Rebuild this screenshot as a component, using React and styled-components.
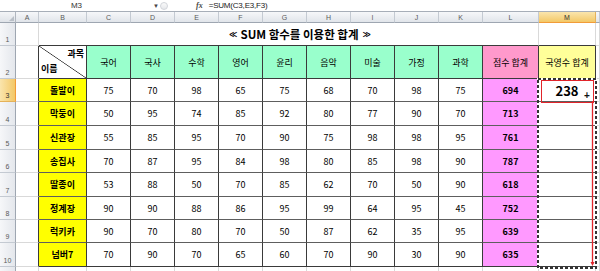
import React from 'react';
import styled, { createGlobalStyle } from 'styled-components';

const GRID = '#d9d9d9';
const DARK = '#3a3a3a';
const HLINE = '#5e5e5e';

const GlobalStyle = createGlobalStyle`
  html, body {
    margin: 0;
    padding: 0;
    background: #fff;
  }
  body {
    font-family: "Noto Sans CJK KR", "Noto Sans", sans-serif;
    overflow: hidden;
  }
`

const Window = styled.div`
  position: relative;
  width: 600px;
  height: 271px;
  overflow: hidden;
  background: #fff;
`
const FormulaBar = styled.div`
  display: flex;
  align-items: center;
  height: 12px;
  box-sizing: border-box;
  border-bottom: 1px solid #a7aeb8;
  font-family: "Liberation Sans", Arial, sans-serif;
  font-size: 8px;
  color: #222;
`
const NameBox = styled.div`
  width: 153px;
  text-align: center;
  color: #333;
`
const DropArrow = styled.span`
  width: 7px;
  font-size: 6px;
  color: #444;
`
const Splitter = styled.span`
  width: 8px;
  height: 8px;
  border-radius: 50%;
  border: 1px solid #d2d5da;
  background: linear-gradient(#fafafa, #e6e8eb);
  box-sizing: border-box;
`
const Fx = styled.span`
  margin-left: 28px;
  font-family: "Liberation Serif", serif;
  font-style: italic;
  font-weight: bold;
  font-size: 8px;
  color: #4a4a4a;
`
const Formula = styled.span`
  margin-left: 6px;
  letter-spacing: -0.2px;
`

const Sheet = styled.div`
  display: grid;
  grid-template-columns: 16px 23px 48px repeat(9, 44px) 56px 57px 1fr;
  grid-template-rows: 11px 23px 33px 23px 24px 24px 23px 24px 23px 23px 24px 10px;
`
const Corner = styled.div`
  position: relative;
  box-sizing: border-box;
  background: linear-gradient(#f4f5f7, #dfe3e8);
  border-right: 1px solid #b1b7c0;
  border-bottom: 1px solid #9ea6b1;
  &::after {
    content: '';
    position: absolute;
    right: 1px;
    bottom: 1px;
    border-left: 5px solid transparent;
    border-bottom: 5px solid #b9bfc7;
  }
`
const ColHead = styled.div`
  display: flex;
  align-items: center;
  justify-content: center;
  box-sizing: border-box;
  font-family: "Liberation Sans", Arial, sans-serif;
  font-size: 7px;
  color: ${p => (p.$active ? '#333' : '#5a5a5a')};
  background: ${p => (p.$active ? 'linear-gradient(#fae5ad, #f3c867)' : 'linear-gradient(#f6f7f9, #e1e5ea)')};
  border-right: 1px solid ${p => (p.$active ? '#e5b259' : '#c4cad2')};
  border-bottom: 1px solid ${p => (p.$active ? '#f29b38' : '#9ea6b1')};
`
const RowHead = styled.div`
  display: flex;
  align-items: flex-end;
  justify-content: center;
  padding-bottom: 2px;
  box-sizing: border-box;
  font-family: "Liberation Sans", Arial, sans-serif;
  font-size: 7px;
  color: ${p => (p.$active ? '#333' : '#5a5a5a')};
  background: ${p => (p.$active ? 'linear-gradient(90deg, #fae5ad, #f3c867)' : 'linear-gradient(90deg, #f6f7f9, #e4e7ec)')};
  border-right: 1px solid ${p => (p.$active ? '#f29b38' : '#9ea6b1')};
  border-bottom: 1px solid ${p => (p.$active ? '#e5b259' : '#c4cad2')};
`
const Cell = styled.div`
  display: flex;
  align-items: center;
  justify-content: center;
  box-sizing: border-box;
  overflow: hidden;
  white-space: nowrap;
  background: ${p => p.$bg || '#fff'};
  border-right: 1px solid ${p => p.$r || GRID};
  border-bottom: 1px solid ${p => p.$b || GRID};
  font-size: 9px;
  font-weight: ${p => (p.$bold ? 700 : 400)};
  color: #000;
`
const TitleCell = styled(Cell)`
  grid-column: span 11;
  gap: 4px;
  padding-left: 22px;
  font-size: 11.5px;
  font-weight: 700;
`
const Guillemet = styled.span`
  font-family: "DejaVu Sans", sans-serif;
  font-size: 8px;
  font-weight: 700;
  letter-spacing: -1px;
`
const DiagCell = styled(Cell)`
  flex-direction: column;
  align-items: stretch;
  justify-content: space-between;
  padding: 3px 2px 5px 2px;
  font-weight: 700;
  background: linear-gradient(to top right, #fff calc(50% - 0.7px), #333 50%, #fff calc(50% + 0.7px));
`
const DiagTop = styled.span`
  align-self: flex-end;
  line-height: 1;
`
const DiagBottom = styled.span`
  align-self: flex-start;
  line-height: 1;
`
const BigValue = styled.span`
  font-size: 13px;
  font-weight: 700;
  padding-top: 1px;
`
const CopyMarquee = styled.svg`
  position: absolute;
  left: 537px;
  top: 78px;
  width: 60px;
  height: 191px;
  pointer-events: none;
`
const TraceBox = styled.div`
  position: absolute;
  left: 541px;
  top: 80px;
  width: 53px;
  height: 23px;
  box-sizing: border-box;
  border: 1.5px solid #e1242a;
`
const TraceLine = styled.svg`
  position: absolute;
  left: 589px;
  top: 101px;
  width: 7px;
  height: 166px;
  pointer-events: none;
`
const Cursor = styled.span`
  position: absolute;
  left: 584px;
  top: 91px;
  font-family: "Liberation Sans", Arial, sans-serif;
  font-size: 10px;
  font-weight: 700;
  line-height: 1;
  color: #111;
`

const columns = ['A', 'B', 'C', 'D', 'E', 'F', 'G', 'H', 'I', 'J', 'K', 'L', 'M', ''];
const subjects = ['국어', '국사', '수학', '영어', '윤리', '음악', '미술', '가정', '과학'];
const students = [
  { name: '돌발이', scores: [75, 70, 98, 65, 75, 68, 70, 98, 75] },
  { name: '막둥이', scores: [50, 95, 74, 85, 92, 80, 77, 90, 70] },
  { name: '신관장', scores: [55, 85, 95, 70, 90, 75, 98, 98, 95] },
  { name: '송집사', scores: [70, 87, 95, 84, 98, 80, 85, 98, 90] },
  { name: '딸종이', scores: [53, 88, 50, 70, 85, 62, 70, 50, 90] },
  { name: '정계장', scores: [90, 90, 88, 86, 95, 99, 64, 95, 45] },
  { name: '럭키카', scores: [90, 70, 80, 70, 50, 87, 62, 35, 95] },
  { name: '넘버7', scores: [70, 90, 70, 65, 60, 70, 90, 30, 90] },
];

function StudentRow({ student, index }) {
  const rowNo = index + 3;
  const last = index === students.length - 1;
  const hb = last ? DARK : HLINE;
  const total = student.scores.reduce((a, b) => a + b, 0);
  const s = student.scores;
  return (
    <>
      <RowHead $active={rowNo === 3}>{rowNo}</RowHead>
      <Cell $r={DARK} />
      <Cell $bg="#ffff00" $bold $r={DARK} $b={hb}>{student.name}</Cell>
      {s.map((v, i) => (
        <Cell key={i} $r={DARK} $b={hb}>{v}</Cell>
      ))}
      <Cell $bg="#ff99ff" $bold $r={DARK} $b={hb}>{total}</Cell>
      <Cell $r={DARK} $b={hb}>
        {rowNo === 3 && <BigValue>{s[0] + s[2] + s[3]}</BigValue>}
      </Cell>
      <Cell />
    </>
  )
}

export default function App() {
  return (
    <Window>
      <GlobalStyle />
      <FormulaBar>
        <NameBox>M3</NameBox>
        <DropArrow>▼</DropArrow>
        <Splitter />
        <Fx>fx</Fx>
        <Formula>=SUM(C3,E3,F3)</Formula>
      </FormulaBar>
      <Sheet>
        <Corner />
        {columns.map((c, i) => (
          <ColHead key={i} $active={c === 'M'}>{c}</ColHead>
        ))}

        <RowHead>1</RowHead>
        <Cell />
        <TitleCell $b={DARK}>
          <Guillemet>≪</Guillemet>
          <span>SUM 함수를 이용한 합계</span>
          <Guillemet>≫</Guillemet>
        </TitleCell>
        <Cell $b={DARK} />
        <Cell />

        <RowHead>2</RowHead>
        <Cell $r={DARK} />
        <DiagCell $r={DARK} $b={DARK}>
          <DiagTop>과목</DiagTop>
          <DiagBottom>이름</DiagBottom>
        </DiagCell>
        {subjects.map(sub => (
          <Cell key={sub} $bg="#99ffcc" $r={DARK} $b={DARK}>{sub}</Cell>
        ))}
        <Cell $bg="#ff99cc" $r={DARK} $b={DARK}>점수 합계</Cell>
        <Cell $bg="#ffff99" $r={DARK} $b={DARK}>국영수 합계</Cell>
        <Cell />

        {students.map((st, i) => (
          <StudentRow key={st.name} student={st} index={i} />
        ))}

        <RowHead />
        {columns.map((c, i) => (
          <Cell key={i} />
        ))}
      </Sheet>

      <CopyMarquee viewBox="0 0 60 191">
        <rect x="1" y="1" width="58" height="189" fill="none" stroke="#fff" strokeWidth="2" />
        <rect x="1" y="1" width="58" height="189" fill="none" stroke="#333" strokeWidth="2" strokeDasharray="3 2" />
      </CopyMarquee>
      <TraceBox />
      <TraceLine viewBox="0 0 7 166">
        <line x1="3.5" y1="0" x2="3.5" y2="163" stroke="#e1242a" strokeWidth="1.3" />
        <path d="M1.5 161 L5.5 161 L3.5 165 Z" fill="#e1242a" />
      </TraceLine>
      <Cursor>+</Cursor>
    </Window>
  )
}
